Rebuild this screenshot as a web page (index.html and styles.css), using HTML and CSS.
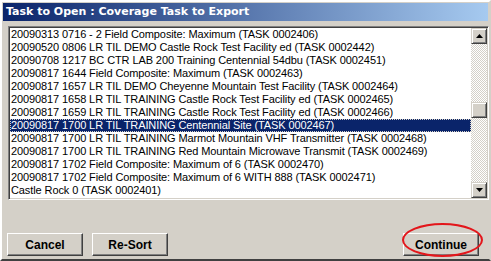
FILE: index.html
```html
<!DOCTYPE html>
<html lang="en">
<head>
  <meta charset="UTF-8">
  <title>Task to Open : Coverage Task to Export</title>
  <link rel="stylesheet" href="styles.css">
</head>
<body>
  <div class="window">
    <div class="titlebar">Task to Open : Coverage Task to Export</div>

    <div class="listbox">
      <ul class="items">
        <li>20090313 0716 - 2 Field Composite: Maximum (TASK 0002406)</li>
        <li>20090520 0806 LR TIL DEMO Castle Rock Test Facility ed (TASK 0002442)</li>
        <li>20090708 1217 BC CTR LAB 200 Training Centennial 54dbu (TASK 0002451)</li>
        <li>20090817 1644 Field Composite: Maximum (TASK 0002463)</li>
        <li>20090817 1657 LR TIL DEMO Cheyenne Mountain Test Facility (TASK 0002464)</li>
        <li>20090817 1658 LR TIL TRAINING Castle Rock Test Facility ed (TASK 0002465)</li>
        <li>20090817 1659 LR TIL TRAINING Castle Rock Test Facility ed (TASK 0002466)</li>
        <li class="selected">20090817 1700 LR TIL TRAINING Centennial Site (TASK 0002467)</li>
        <li>20090817 1700 LR TIL TRAINING Marmot Mountain VHF Transmitter (TASK 0002468)</li>
        <li>20090817 1700 LR TIL TRAINING Red Mountain Microwave Transmit (TASK 0002469)</li>
        <li>20090817 1702 Field Composite: Maximum of 6 (TASK 0002470)</li>
        <li>20090817 1702 Field Composite: Maximum of 6 WITH 888 (TASK 0002471)</li>
        <li>Castle Rock 0 (TASK 0002401)</li>
      </ul>
      <div class="scrollbar">
        <div class="arrow">
          <svg width="7" height="4" viewBox="0 0 7 4"><polygon points="3.5,0 7,4 0,4" fill="#000"/></svg>
        </div>
        <div class="track">
          <div class="thumb"></div>
        </div>
        <div class="arrow">
          <svg width="7" height="4" viewBox="0 0 7 4"><polygon points="0,0 7,0 3.5,4" fill="#000"/></svg>
        </div>
      </div>
    </div>

    <div class="buttons">
      <button class="btn">Cancel</button>
      <button class="btn">Re-Sort</button>
      <span class="spacer"></span>
      <button class="btn default">Continue</button>
      <div class="circle"></div>
    </div>
  </div>
</body>
</html>
```

FILE: styles.css
```css
* {
  box-sizing: border-box;
}
body {
  margin: 0;
  background: #d4d0c8;
  font-family: "Liberation Sans", Arial, sans-serif;
}
.window {
  width: 491px;
  height: 261px;
  background: #d4d0c8;
  border-top: 2px solid #fff;
  border-left: 2px solid #fff;
  border-right: 2px solid #d4d0c8;
  border-bottom: 2px solid #404040;
  padding: 1px 0 3px 1px;
  display: flex;
  flex-direction: column;
}
.titlebar {
  height: 18px;
  flex: none;
  margin-right: 1px;
  padding-left: 3px;
  background: linear-gradient(90deg, #0a246a, #a6caf0);
  color: #fff;
  font-family: "DejaVu Sans", sans-serif;
  font-weight: bold;
  font-size: 11px;
  line-height: 18px;
  white-space: nowrap;
}
.listbox {
  flex: none;
  margin: 5px 0 0 5px;
  height: 174px;
  display: flex;
  border-top: 1px solid #808080;
  border-left: 1px solid #808080;
  border-bottom: 1px solid #fff;
  border-right: 1px solid #fff;
  box-shadow: inset 1px 1px 0 #404040, inset -1px -1px 0 #d4d0c8;
  padding: 1px;
  background: #fff;
}
.items {
  list-style: none;
  margin: 0;
  padding: 0;
  flex: 1;
  overflow: hidden;
}
.items li {
  height: 13px;
  line-height: 13px;
  font-size: 11px;
  letter-spacing: -0.1px;
  padding-left: 1px;
  white-space: nowrap;
  color: #000;
}
.items li.selected {
  background: #0a246a;
  color: #fff;
  outline: 1px dotted #d4d0c8;
  outline-offset: -1px;
}
.scrollbar {
  width: 16px;
  display: flex;
  flex-direction: column;
}
.arrow {
  height: 16px;
  background: #d4d0c8;
  border-top: 1px solid #d4d0c8;
  border-left: 1px solid #d4d0c8;
  border-right: 1px solid #404040;
  border-bottom: 1px solid #404040;
  box-shadow: inset 1px 1px 0 #fff, inset -1px -1px 0 #808080;
  display: flex;
  align-items: center;
  justify-content: center;
}
.track {
  flex: 1;
  background: repeating-conic-gradient(#d4d0c8 0 25%, #fff 0 50%);
  background-size: 2px 2px;
  padding-top: 58px;
}
.thumb {
  height: 16px;
  background: #d4d0c8;
  border-top: 1px solid #d4d0c8;
  border-left: 1px solid #d4d0c8;
  border-right: 1px solid #404040;
  border-bottom: 1px solid #404040;
  box-shadow: inset 1px 1px 0 #fff, inset -1px -1px 0 #808080;
}
.buttons {
  position: relative;
  display: flex;
  gap: 9px;
  margin: auto 0 0 4px;
  padding-right: 10px;
}
.spacer {
  flex: 1;
}
.btn {
  width: 76px;
  height: 23px;
  padding: 0;
  margin: 0;
  background: #d4d0c8;
  border-top: 1px solid #fff;
  border-left: 1px solid #fff;
  border-right: 1px solid #404040;
  border-bottom: 1px solid #404040;
  box-shadow: inset -1px -1px 0 #808080;
  font-family: "Liberation Sans", Arial, sans-serif;
  font-weight: bold;
  font-size: 12px;
  color: #000;
}
/* red marker drawn round the Continue button */
.circle {
  position: absolute;
  right: 6px;
  top: -10px;
  width: 81px;
  height: 34px;
  border: 2px solid #e3161b;
  border-radius: 50%;
}
```
